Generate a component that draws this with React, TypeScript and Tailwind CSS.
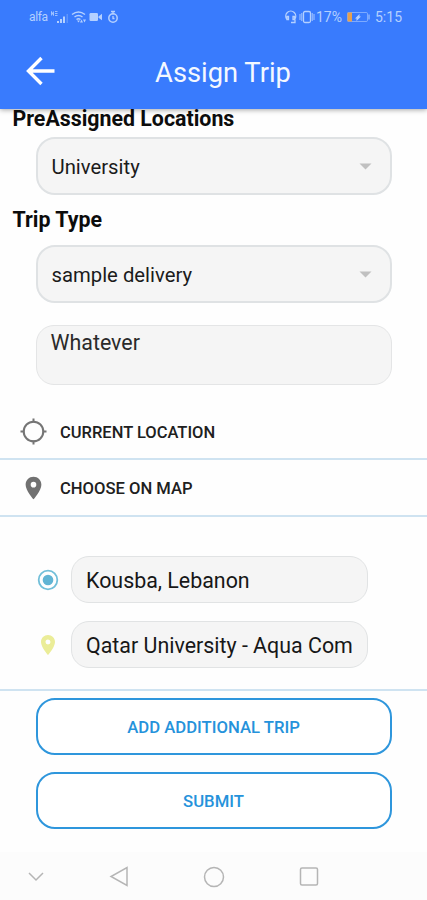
import React from "react";

const pinPath =
  "M12 2C8.13 2 5 5.13 5 9c0 5.25 7 13 7 13s7-7.75 7-13c0-3.87-3.13-7-7-7zm0 9.5a2.5 2.5 0 0 1 0-5 2.5 2.5 0 0 1 0 5z";

const StatusBar = () => (
  <div className="flex h-[34px] items-center justify-between pl-[29px] pr-[25px] text-[#b4d0ff]">
    <div className="flex items-center">
      <span className="text-[12px] leading-none tracking-[-0.4px]">alfa</span>
      {/* mobile signal */}
      <svg className="ml-[3px]" width="20" height="14" viewBox="0 0 20 14">
        <path
          d="M0.5 5.5v-4l2 4v-4M4 1.5h2.5M4 3.5h2.5M4 5.5h2.5"
          fill="none"
          stroke="currentColor"
          strokeWidth="0.8"
        />
        <path d="M6 11h2v2H6zM9 9h2v4H9zM12 6.5h2V13h-2z" fill="currentColor" />
        <path d="M15.5 4H17v9h-1.5z" fill="currentColor" opacity="0.3" />
      </svg>
      {/* wifi */}
      <svg width="16" height="14" viewBox="0 0 16 14">
        <path
          d="M1 4.5Q7.5 -.5 14 4.5M3.5 7Q7.5 4 11.5 7M5.5 9.5Q7.5 8 9.5 9.5"
          fill="none"
          stroke="currentColor"
          strokeWidth="1.5"
        />
        <path d="M6 10.5h3l-1.5 2zM10.5 9.5l1.5 3H9zM13.5 12.5l-1.5-3h3z" fill="currentColor" />
      </svg>
      {/* camera */}
      <svg className="ml-[2px]" width="14" height="12" viewBox="0 0 14 12">
        <rect x="0.5" y="2" width="8.5" height="8" rx="1.2" fill="currentColor" />
        <path d="M9.5 5.5L13 2.8v6.4L9.5 6.7z" fill="currentColor" />
      </svg>
      {/* timer */}
      <svg className="ml-[4px]" width="12" height="14" viewBox="0 0 12 14">
        <circle cx="6" cy="8" r="4.2" fill="none" stroke="currentColor" strokeWidth="1.5" />
        <path d="M4 1.5h4M6 1.5v3M6 6v2.5h1.5" fill="none" stroke="currentColor" strokeWidth="1.3" />
      </svg>
    </div>
    <div className="flex items-center">
      {/* headset */}
      <svg width="13" height="14" viewBox="0 0 13 14">
        <path
          d="M3 9.5A5 5 0 1 1 10.5 9.5M3 6.5v3h1.5v-3zM9 6.5v3h1.5v-3zM11 9.5v3H7"
          fill="none"
          stroke="currentColor"
          strokeWidth="1.3"
        />
      </svg>
      {/* vibrate */}
      <svg className="ml-[2px]" width="16" height="14" viewBox="0 0 16 14">
        <rect x="4.5" y="1.5" width="7" height="11" rx="1.5" fill="none" stroke="currentColor" strokeWidth="1.3" />
        <path d="M1 4v6M2.8 3v8M13.2 3v8M15 4v6" stroke="currentColor" strokeWidth="0.9" />
      </svg>
      <span className="ml-[1px] text-[14px] leading-none">17%</span>
      {/* battery */}
      <svg className="ml-[5px]" width="23" height="12" viewBox="0 0 23 12">
        <rect x="0.5" y="1.5" width="20" height="9" rx="1.2" fill="none" stroke="currentColor" strokeWidth="0.8" opacity="0.7" />
        <path d="M0.5 1.5H5v9H0.5z" fill="#e6a04e" />
        <path d="M8 7.5L12.500 3v2.500H14L9.500 10V7.500z" fill="currentColor" />
        <path d="M21.5 3.5h1v5h-1z" fill="currentColor" />
      </svg>
      <span className="ml-[5px] text-[14px] leading-none">5:15</span>
    </div>
  </div>
);

const Header = () => (
  <header className="relative z-10 h-[109px] bg-[#397bfd] shadow-[0_1px_5px_rgba(0,0,0,0.35)]">
    <StatusBar />
    <div className="grid h-[75px] grid-cols-[1fr_auto_1fr] items-center pl-[19px]">
      <button className="ml-[7px] w-[30px]" aria-label="Back">
        <svg className="-mt-px" width="30" height="30" viewBox="0 0 30 30">
          <path
            d="M28.5 15H3M15.5 2L2.5 15l13 13"
            fill="none"
            stroke="#fff"
            strokeWidth="3.4"
          />
        </svg>
      </button>
      <h1 className="pt-[2px] text-[27.3px] leading-[30px] text-[#f4f8ff]">Assign Trip</h1>
    </div>
  </header>
);

const Select = ({ value }: { value: string }) => (
  <div className="mx-[35.5px] flex h-[58px] items-center justify-between rounded-[19px] border-2 border-[#dfe2e4] bg-[#f5f5f5] pl-[14px] pr-[18px]">
    <span className="pt-[2px] text-[20.3px] text-[#1b1b1b]">{value}</span>
    <svg width="13" height="7" viewBox="0 0 13 7">
      <path d="M0.5 0.5h12l-6 6z" fill="#c0c0c0" />
    </svg>
  </div>
);

const PlaceInput = ({ icon, value }: { icon: React.ReactNode; value: string }) => (
  <div className="flex items-center">
    <div className="ml-[36px] flex w-[24px] justify-center">{icon}</div>
    <div className="ml-[11px] flex h-[47px] w-[297px] items-center rounded-[18px] border border-[#e1e3e4] bg-[#f5f5f5] pl-[14px]">
      <span className="whitespace-nowrap pt-[4px] text-[21.4px] text-[#171717]">{value}</span>
    </div>
  </div>
);

const OutlineButton = ({ children }: { children: React.ReactNode }) => (
  <button className="flex h-[57px] items-center justify-center rounded-[19px] border-2 border-[#2e96dc] bg-white pt-[3px] text-[16.7px] font-medium text-[#2592db]">
    {children}
  </button>
);

const NavBar = () => (
  <nav className="h-[48px] bg-[#fcfcfc]">
    <svg width="427" height="48" viewBox="0 0 427 48" fill="none" stroke="#b5b5b5" strokeWidth="1.5">
      <path d="M29 21l7 7 7-7" />
      <path d="M127 15.5v18l-16-9z" />
      <circle cx="214" cy="25" r="9.5" />
      <rect x="300.5" y="16" width="17" height="17" rx="1.5" />
    </svg>
  </nav>
);

export default function App() {
  return (
    <div className="flex h-[900px] w-[427px] flex-col overflow-hidden bg-[#fefefe] font-[Roboto,sans-serif]">
      <Header />
      <main className="flex-1">
        <h2 className="-mt-[2px] ml-[12.5px] h-[30px] text-[21.35px] font-bold leading-[24px] text-[#0c0c0c]">
          PreAssigned Locations
        </h2>
        <Select value="University" />
        <h2 className="mb-[12px] ml-[12.5px] mt-[12px] text-[21.35px] font-bold leading-[26px] text-[#0c0c0c]">
          Trip Type
        </h2>
        <Select value="sample delivery" />
        <div className="mx-[35.5px] mt-[22px] h-[60px] rounded-[18px] border border-[#e4e5e6] bg-[#f5f5f5] pl-[14px] pt-[5px] text-[21.4px] leading-[24px] text-[#2a2a2a]">
          Whatever
        </div>

        <div className="mt-[20px] flex h-[55px] items-center border-b-2 border-[#cfe3f1] pl-[20px]">
          <svg width="27" height="27" viewBox="0 0 27 27" fill="none" stroke="#757575" strokeWidth="2">
            <circle cx="13.5" cy="13.5" r="9.8" />
            <path d="M13.5 0.5v4M13.5 22.5v4M0.5 13.5h4M22.5 13.5h4" />
          </svg>
          <span className="ml-[13px] pt-[4px] text-[16.5px] font-medium text-[#202020]">CURRENT LOCATION</span>
        </div>
        <div className="flex h-[57px] items-center border-b-2 border-[#cfe3f1] pl-[20px]">
          <svg width="27" height="28" viewBox="0 0 24 24" fill="#717171">
            <path d={pinPath} />
          </svg>
          <span className="ml-[13px] pt-[4px] text-[16.6px] font-medium text-[#202020]">CHOOSE ON MAP</span>
        </div>

        <div className="flex h-[174px] flex-col gap-[18px] border-b-2 border-[#cfe3f1] pt-[39px]">
          <PlaceInput
            value="Kousba, Lebanon"
            icon={
              <svg width="22" height="22" viewBox="0 0 22 22">
                <circle cx="11" cy="11" r="9.3" fill="none" stroke="#72bfd9" strokeWidth="1.8" />
                <circle cx="11" cy="11" r="5.3" fill="#60b4d4" />
              </svg>
            }
          />
          <PlaceInput
            value="Qatar University - Aqua Com"
            icon={
              <svg width="24" height="24" viewBox="0 0 24 24" fill="#ebed98">
                <path d={pinPath} />
              </svg>
            }
          />
        </div>

        <div className="mx-[35.5px] mt-[7px] flex flex-col gap-[17px]">
          <OutlineButton>ADD ADDITIONAL TRIP</OutlineButton>
          <OutlineButton>SUBMIT</OutlineButton>
        </div>
      </main>
      <NavBar />
    </div>
  );
}
